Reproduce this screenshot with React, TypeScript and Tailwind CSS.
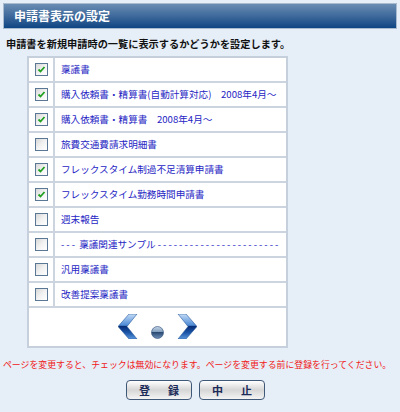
import React from "react";

type Item = { label: string; checked: boolean };

const items: Item[] = [
  { label: "稟議書", checked: true },
  { label: "購入依頼書・精算書(自動計算対応)　2008年4月～", checked: true },
  { label: "購入依頼書・精算書　2008年4月～", checked: true },
  { label: "旅費交通費請求明細書", checked: false },
  { label: "フレックスタイム制過不足清算申請書", checked: true },
  { label: "フレックスタイム勤務時間申請書", checked: true },
  { label: "週末報告", checked: false },
  { label: "--- 稟議関連サンプル -----------------------", checked: false },
  { label: "汎用稟議書", checked: false },
  { label: "改善提案稟議書", checked: false },
];

const font = { fontFamily: '"Noto Sans CJK JP", "Noto Sans", sans-serif' };

function CheckBox({ checked }: { checked: boolean }) {
  return (
    <div className="flex h-[13px] w-[13px] items-center justify-center border border-[#5a7896] bg-gradient-to-br from-[#d8d8d8] via-[#f2f2f2] to-white">
      {checked && (
        <svg width="9" height="9" viewBox="0 0 9 9">
          <path d="M1.5 4.5 L3.5 6.5 L7.5 2" fill="none" stroke="#22a022" strokeWidth="1.8" />
        </svg>
      )}
    </div>
  );
}

function Arrow({ dir }: { dir: "left" | "right" }) {
  const id = `g-${dir}`;
  const pts = dir === "left" ? "11,0 19,0 9,12.5 19,25 11,25 0,12.5" : "1,0 9,0 20,12.5 9,25 1,25 11,12.5";
  return (
    <svg width="20" height="25" viewBox="0 0 20 25">
      <defs>
        <linearGradient id={id} x1="0" y1="0" x2="0" y2="1">
          <stop offset="0" stopColor="#c4dcf6" />
          <stop offset="0.45" stopColor="#4d8ad6" />
          <stop offset="0.5" stopColor="#082e78" />
          <stop offset="0.75" stopColor="#1c56a8" />
          <stop offset="1" stopColor="#5b97dc" />
        </linearGradient>
      </defs>
      <polygon points={pts} fill={`url(#${id})`} stroke="#2a5a9c" strokeWidth="0.6" />
    </svg>
  );
}

function Dot() {
  return (
    <svg width="13" height="13" viewBox="0 0 13 13">
      <defs>
        <linearGradient id="g-dot" x1="0" y1="0" x2="0" y2="1">
          <stop offset="0" stopColor="#c8d8ea" />
          <stop offset="0.45" stopColor="#7f9cbc" />
          <stop offset="0.5" stopColor="#2a4a72" />
          <stop offset="1" stopColor="#6d8fb8" />
        </linearGradient>
      </defs>
      <circle cx="6.5" cy="6.5" r="6" fill="url(#g-dot)" stroke="#3c5a82" strokeWidth="0.7" />
    </svg>
  );
}

function Btn({ chars }: { chars: [string, string] }) {
  return (
    <button className="flex h-[20px] w-[66px] items-center justify-center gap-[18px] rounded-[4px] border border-[#3f5878] bg-gradient-to-b from-white via-[#d6d6d6] to-[#f4f4f4] text-[11px] font-bold text-[#1b2a58]">
      <span>{chars[0]}</span>
      <span>{chars[1]}</span>
    </button>
  );
}

function Label({ text }: { text: string }) {
  // dashes in the sample separator are wider in the original font
  if (text.startsWith("---")) {
    return (
      <span>
        <span className="tracking-[2px]">---</span> 稟議関連サンプル{" "}
        <span className="tracking-[2px]">{"-".repeat(23)}</span>
      </span>
    );
  }
  return <span>{text}</span>;
}

export default function App() {
  return (
    <div className="h-[412px] w-[400px] bg-[#e6eef7] px-[3px] pt-[3px]" style={font}>
      <div className="flex h-[26px] items-center border border-[#a9bccf] bg-gradient-to-b from-[#6a8db3] to-[#0c4683] pl-[10px] text-[12px] font-bold text-white">
        申請書表示の設定
      </div>
      <div className="mt-[8px] pl-[3px] text-[10.2px] font-bold leading-[14px] text-[#111]">
        申請書を新規申請時の一覧に表示するかどうかを設定します。
      </div>
      <div className="ml-[24px] mt-[5px] w-[261px] border-2 border-[#c6d0dc] bg-white">
        {items.map((it) => (
          <div key={it.label} className="flex h-[25px] border-b-2 border-[#cbd4df]">
            <div className="flex w-[26px] flex-none items-center justify-center border-r-2 border-[#cbd4df]">
              <CheckBox checked={it.checked} />
            </div>
            <div className="flex min-w-0 flex-1 items-center overflow-hidden whitespace-nowrap pl-[6px] text-[9.6px] text-[#2626c4]">
              <Label text={it.label} />
            </div>
          </div>
        ))}
        <div className="flex h-[38px] items-end justify-center gap-[13px] pb-[7px]">
          <Arrow dir="left" />
          <Dot />
          <Arrow dir="right" />
        </div>
      </div>
      <div className="mt-[11px] whitespace-nowrap text-[8.9px] leading-[12px] text-[#f01818]">
        ページを変更すると、チェックは無効になります。ページを変更する前に登録を行ってください。
      </div>
      <div className="mt-[9px] flex justify-center gap-[7px] pr-[9px]">
        <Btn chars={["登", "録"]} />
        <Btn chars={["中", "止"]} />
      </div>
    </div>
  );
}
